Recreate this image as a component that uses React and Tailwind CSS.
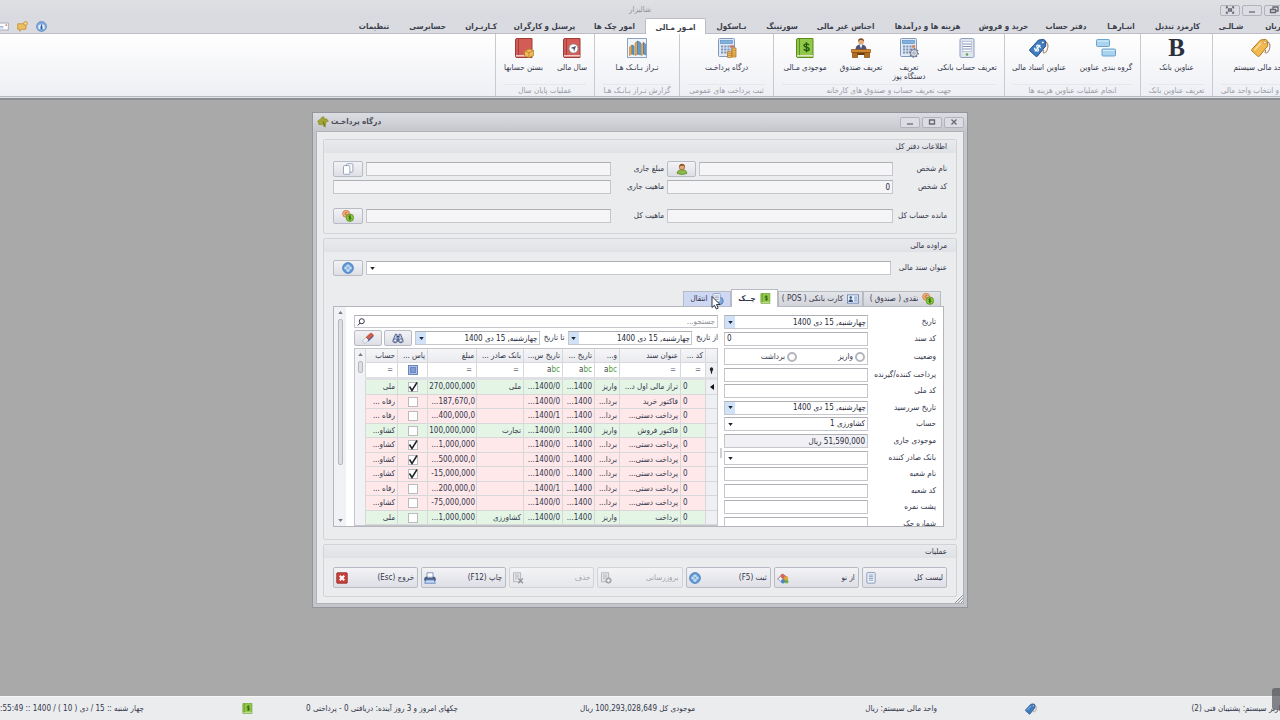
import React from 'react';

/* ---------- icons ---------- */
const Svg = ({ className = 'size-5', box = 20, children }) => (
  <svg viewBox={`0 0 ${box} ${box}`} className={`shrink-0 ${className}`} fill="none" aria-hidden="true">
    {children}
  </svg>
);

const TagIcon = ({ className, fill = '#f2b950', stroke = '#b57a1f', money }) => (
  <Svg className={className}>
    <path d="M14 4.500c3.500-1.500 5.500 1 4.800 5-.5 3-2.300 6-4 5.500-1-.4-.8-2 .2-3" stroke="#a98a6a" strokeWidth="1.100" />
    <path d="M0.800 11.500 9.500 2l5.200-.6 1.800 1.500.2 5L8.400 18.200q-.8.7-1.600 0L.8 12.800q-.6-.6 0-1.300z" fill={fill} stroke={stroke} />
    <circle cx="13.800" cy="4.500" r="1.300" fill="#fff" stroke={stroke} strokeWidth=".6" />
    {money && (
      <g transform="rotate(40 8.500 10)" stroke="#fff" strokeWidth="1.200">
        <path d="M10.800 8.200c-1-1.500-4.600-1.300-4.400.4.200 1.700 4.500 1 4.500 2.900 0 1.700-3.700 1.900-4.800.2M8.600 5.800v8.400" />
      </g>
    )}
    {!money && <path d="M3.500 12 10 5" stroke="#ffffff" strokeOpacity=".5" strokeWidth="1.500" />}
  </Svg>
);
const BoldIcon = () => <span className="h-5 font-['Liberation_Serif',serif] text-[25px] leading-5 font-bold text-[#2b3040]">B</span>;
const BlocksIcon = () => (
  <Svg>
    <rect x=".5" y="1.500" width="13" height="7" rx="1" fill="#a9d3ef" stroke="#6aa3cf" />
    <rect x="6" y="11" width="13.500" height="7" rx="1" fill="#a9d3ef" stroke="#6aa3cf" />
    <path d="M1.500 3h11M7 12.500h11.500" stroke="#d9eefa" />
  </Svg>
);
const PhoneDocIcon = () => (
  <Svg>
    <rect x="3" y=".5" width="14" height="19" rx="1.500" fill="#dfe5f0" stroke="#8f9ebd" />
    <rect x="5.500" y="3.500" width="9" height="10" fill="#fff" stroke="#a9b5cc" strokeWidth=".7" />
    <path d="M6 6h8M6 8.500h8M6 11h8" stroke="#8496ba" />
    <circle cx="10" cy="16.500" r="1.200" fill="#58a83e" />
  </Svg>
);
const CalcBase = () => (
  <>
    <rect x="1.500" y=".5" width="16" height="18" rx="1" fill="#dfe9f5" stroke="#8299bd" />
    <rect x="3.500" y="2.500" width="12" height="3" fill="#7fb2e0" stroke="#5685b8" strokeWidth=".6" />
    <path d="M4 8.500h12M4 11.500h12M4 14.500h12" stroke="#7d93b8" strokeWidth="2" strokeDasharray="2.200 1" />
  </>
);
const CalcGearIcon = () => (
  <Svg>
    <CalcBase />
    <path d="M13 8.500h3" stroke="#dd7a3c" strokeWidth="2" />
    <circle cx="15" cy="15" r="3.500" fill="#e3e6ec" stroke="#6f7a8e" />
    <circle cx="15" cy="15" r="4.300" stroke="#6f7a8e" strokeWidth="1.200" strokeDasharray="1.500 1.800" />
    <circle cx="15" cy="15" r="1.200" fill="#fff" stroke="#6f7a8e" strokeWidth=".7" />
  </Svg>
);
const CalcCoinsIcon = () => (
  <Svg>
    <CalcBase />
    <path d="M13 8.500h4" stroke="#cf6a55" strokeWidth="2" />
    <path d="M15 10h4v9h-4zM10.500 13.500h4v6h-4z" fill="#edb85e" stroke="#b57d2c" strokeWidth=".8" />
    <path d="M15 12.500h4M15 15h4M15 17.200h4M10.500 15.500h4M10.500 17.500h4" stroke="#b57d2c" strokeWidth=".6" />
  </Svg>
);
const DeskIcon = () => (
  <Svg>
    <circle cx="10" cy="3.500" r="3" fill="#e2ad7c" />
    <path d="M7 3.500C6.500-1 13.500-1 13 3.500 12 1.500 8 1.500 7 3.500z" fill="#7b4a22" />
    <path d="M4.500 12c0-4 2-5.500 5.500-5.500s5.500 1.500 5.500 5.500z" fill="#4b5578" />
    <path d="m8.500 6.500 1.500 4 1.500-4z" fill="#fff" />
    <path d="M.5 11.500h19v3h-19z" fill="#d5872f" stroke="#8e5214" strokeWidth=".7" />
    <path d="M1.500 14.500h5v5h-5zM13.500 14.500h5v5h-5z" fill="#b66c1f" stroke="#7d470f" strokeWidth=".7" />
    <path d="M6.500 14.500h7v2.500h-7z" fill="#6e3e10" />
  </Svg>
);
const BookIcon = ({ className, color = '#d35d56', edge = '#9c3d38', children }) => (
  <Svg className={className}>
    <path d="M1.500 2q0-1.500 1.500-1.500h15V19.500H3q-1.500 0-1.500-1.500z" fill={color} stroke={edge} />
    <path d="M4.500.5v17.500" stroke={edge} strokeWidth=".9" />
    <path d="M2 17.800h16" stroke="#f4ecec" strokeWidth="1.200" />
    {children}
  </Svg>
);
const Dollar = ({ color = '#215c0c' }) => (
  <path d="M14 7.200c-1.200-2-5-1.700-5 .3 0 2.200 5.200 1.200 5.200 3.400 0 2-4.200 2.300-5.400.3M11.500 4.200v10" stroke={color} strokeWidth="1.400" />
);
const MoneyBookIcon = ({ className }) => (
  <BookIcon className={className} color="#93c74a" edge="#5a8c1e"><Dollar /></BookIcon>
);
const BookBoxIcon = () => (
  <BookIcon>
    <path d="m10.500 13 5-2 4 1.500v5l-4.500 2.200-4.500-2z" fill="#efbb5c" stroke="#b27a22" strokeWidth=".7" />
    <path d="m10.500 13 4.500 1.700 4.500-2M15 14.700v5" stroke="#b27a22" strokeWidth=".7" />
  </BookIcon>
);
const BookClockIcon = () => (
  <BookIcon>
    <circle cx="11.500" cy="10.500" r="4.500" fill="#fff" stroke="#8b8f99" strokeWidth=".8" />
    <path d="m14 8-5.500 2 3 .8.500 3z" fill="#4a5266" />
  </BookIcon>
);
const BarsIcon = () => (
  <Svg>
    <rect x=".5" y=".5" width="19" height="19" fill="#eef4fa" stroke="#8ea4c0" />
    <path d="M2.500 9l2.500-2V16l-2.500 1.500zM8 5l2.500-2v13.500L8 17.500zM14.500 6l2-1.500V16l-2 1.500z" fill="#e9a94f" stroke="#a96d24" strokeWidth=".5" />
    <path d="M5 7l2 1v9l-2-1zM10.500 3l3 1.500V17l-3-1zM16.500 4.500l2 1.500v11l-2-1z" fill="#5f9bd0" stroke="#34648f" strokeWidth=".5" />
  </Svg>
);
const PlusIcon = ({ className = 'size-3' }) => (
  <Svg className={className} box={16}>
    <circle cx="8" cy="8" r="7.200" fill="#5f9ad6" stroke="#3c74b0" />
    <path d="M8 3.500v9M3.500 8h9" stroke="#fff" strokeWidth="3.600" />
    <path d="M8 4.500v7M4.500 8h7" stroke="#5f9ad6" strokeWidth="1.300" />
  </Svg>
);
const CoinsIcon = ({ className = 'size-3' }) => (
  <Svg className={className} box={16}>
    <circle cx="5.500" cy="5" r="4.700" fill="#efb080" stroke="#c97737" />
    <path d="M7 3.500C4 2 3 7 6.500 6.500" stroke="#a4501b" />
    <circle cx="10.500" cy="10.300" r="5" fill="#8cc63e" stroke="#568a1c" />
    <path d="M12 8.500c-1-1-3-.7-3 .5s3 .8 3 2-2.200 1.300-3.200.3M10.500 7v6.800" stroke="#275a0b" />
  </Svg>
);
const CopyIcon = () => (
  <Svg className="size-3" box={16}>
    <rect x="6" y="1" width="8.500" height="11" rx="1" fill="#fff" stroke="#7c8cae" />
    <rect x="2" y="3.500" width="8.500" height="11.500" rx="1" fill="#fff" stroke="#7c8cae" />
  </Svg>
);
const UserIcon = () => (
  <Svg className="size-3" box={16}>
    <path d="M1.500 14c0-4 3-5 6.500-5s6.500 1 6.500 5q-6.500 2.500-13 0z" fill="#8db84a" stroke="#5d8526" />
    <circle cx="8" cy="5.500" r="3.600" fill="#e0a878" stroke="#8c5325" strokeWidth=".8" />
    <path d="M4.300 5.500C3.500-.5 12.500-.5 11.700 5.500 10.500 3 6 3 4.300 5.500z" fill="#8c5325" />
  </Svg>
);
const CardIcon = () => (
  <Svg className="size-3" box={16}>
    <rect x=".5" y="2.500" width="15" height="11" fill="#e8f0fa" stroke="#5477ab" />
    <circle cx="5" cy="6" r="1.700" fill="#34517f" />
    <path d="M2 12c0-5 6-5 6 0z" fill="#34517f" />
    <path d="M9.500 5.500H14M9.500 8H14M9.500 10.500H14" stroke="#5477ab" />
  </Svg>
);
const TransferIcon = () => (
  <Svg className="size-3" box={16}>
    <circle cx="10" cy="10.500" r="5" fill="#7fa9dc" stroke="#4873ad" />
    <rect x="1.500" y=".8" width="9.500" height="11" rx="1" fill="#f2f6fc" stroke="#7d92b8" />
    <path d="M3.500 4h5.500M3.500 6.200h5.500M3.500 8.500h5.500" stroke="#7d92b8" />
  </Svg>
);
const BinocularsIcon = () => (
  <Svg className="h-3 w-3.5" box={16}>
    <path d="M4.500 3h2l1 9c-.5 3-6 3-6.500 0zM11.500 3h-2l-1 9c.5 3 6 3 6.500 0z" fill="#b9c8e8" stroke="#34456f" />
    <circle cx="4.200" cy="11.300" r="2" fill="#eef3fc" stroke="#34456f" strokeWidth=".8" />
    <circle cx="11.800" cy="11.300" r="2" fill="#eef3fc" stroke="#34456f" strokeWidth=".8" />
    <path d="M6.500 6h3" stroke="#34456f" strokeWidth="1.500" />
  </Svg>
);
const EraserIcon = () => (
  <Svg className="size-3" box={16}>
    <path d="M1 11.500 5.500 7l4 3.500L5 14.500q-1 .8-2 0L1 13z" fill="#f0f2f7" stroke="#9aa2b5" strokeWidth=".8" />
    <path d="m5.500 7 5.500-5q1-.8 2 0l1.800 1.500q.8.800 0 1.800l-5.300 5.200z" fill="#d95b45" stroke="#9d3524" strokeWidth=".8" />
    <path d="m8 12 7-6.500" stroke="#4169a8" strokeWidth="1.500" />
  </Svg>
);
const ListIcon = () => (
  <Svg className="size-3" box={16}>
    <rect x="2.500" y=".8" width="11" height="14" rx="1" fill="#f4f7fc" stroke="#6a80ad" />
    <path d="M5 4h6M5 6.300h6M5 8.600h6M5 11h6" stroke="#6a80ad" />
  </Svg>
);
const RenewIcon = () => (
  <Svg className="size-3" box={16}>
    <path d="m1 9.500 6-7 6 4-4.500 7z" fill="#d8654f" stroke="#a43d2a" strokeWidth=".8" />
    <path d="m1 9.500 3.500-4 3.500 4-3 3z" fill="#eceff6" stroke="#8d97ab" strokeWidth=".8" />
    <circle cx="12" cy="8.500" r="3" fill="#e0a63a" />
    <circle cx="8" cy="12.500" r="2.800" fill="#4b86c9" />
    <circle cx="12.800" cy="12.700" r="2.500" fill="#6fae41" />
  </Svg>
);
const DocBadgeIcon = ({ cross }) => (
  <Svg className="size-3" box={16}>
    <path d="M2 1h9.500v12H2z" fill="#e7e8eb" stroke="#a3a6ad" />
    <path d="M4 4h5.500M4 6.500h5.500M4 9h3" stroke="#a3a6ad" />
    {cross ? <path d="m8.500 8.500 6 6.500m0-6.500-6 6.500" stroke="#8f929a" strokeWidth="1.800" /> : <circle cx="11.300" cy="11.300" r="3.600" fill="#b3b6bc" stroke="#94979f" />}
    {!cross && <path d="M9.300 11.300h4M11.300 9.500v3.600" stroke="#fff" />}
  </Svg>
);
const PrinterIcon = () => (
  <Svg className="size-3" box={16}>
    <path d="M4 1h8v6H4z" fill="#fff" stroke="#6078a8" />
    <path d="M1 8.500q0-1.500 1.500-1.500H4v1.500h8V7h1.500Q15 7 15 8.500v3H1z" fill="#54688f" stroke="#2f4170" />
    <path d="M2.500 10.500h11l1.500 4.500H1z" fill="#c3d6f3" stroke="#5177b8" />
  </Svg>
);
const ExitIcon = () => (
  <Svg className="size-3" box={16}>
    <rect x="1" y="1" width="14" height="14" rx="1" fill="#c8413b" stroke="#8c211d" />
    <path d="m5 5 6 6m0-6-6 6" stroke="#fff" strokeWidth="2.600" />
  </Svg>
);
const LeafIcon = () => (
  <Svg className="size-3" box={16}>
    <path d="M1 8c1-4 3-3 4-3 0-3 2-4 4-4 0 2 1 2 1 3 3-1 4 1 5 3-2 0-2 2-4 2 1 3 0 4-2 5-1-1-1-2-1-4-2 2-4 2-6 1 1-2 0-2-1-3z" fill="#a3a532" stroke="#7b7f1d" strokeWidth=".8" />
    <path d="M8 7q2 4 3 8" stroke="#6b6a1b" strokeWidth="1.200" />
  </Svg>
);
const InfoIcon = () => (
  <Svg className="size-[11px]" box={16}>
    <circle cx="8" cy="8" r="7.200" fill="#7faade" stroke="#5580b6" />
    <path d="M3.500 6.500q4.500-3.500 9 0v5H10v-4H6v4H3.500z" fill="#e6f1fb" />
    <path d="M8 5v7" stroke="#32598f" strokeWidth="1.600" />
  </Svg>
);
const ChatIcon = () => (
  <Svg className="size-[11px]" box={16}>
    <path d="M1 4h12v8H7l-3 3v-3H1z" fill="#f0be5e" stroke="#b98327" />
    <circle cx="12.500" cy="3.500" r="2.800" fill="#f6d28a" stroke="#b98327" />
  </Svg>
);
const MailIcon = () => (
  <Svg className="size-[11px]" box={16}>
    <path d="M-2 3h17v10H-2z" fill="#fff" stroke="#8a93a8" />
    <path d="M1 8h7M1 10h7" stroke="#7d9bcb" />
    <path d="M11 5h2v2h-2z" fill="#c8413b" />
  </Svg>
);
const Caret = () => (
  <svg viewBox="0 0 6 4" className="h-[3px] w-[5px] shrink-0" aria-hidden="true"><path d="M0 0h6L3 4z" fill="#1f2430" /></svg>
);

/* ---------- shared controls ---------- */
const field = 'h-3.5 min-w-0 rounded-none border border-[#c6c7cc] border-t-[#aeb0b6] px-0.5 text-[#262938] outline-none';
const buttonFace = 'border border-[#b9bbc4] rounded-[2px] bg-linear-to-b from-[#f3f3f6] to-[#dedfe6]';

const IconButton = ({ label, children, className = 'w-[29px]' }) => (
  <button type="button" aria-label={label} className={`flex h-4 shrink-0 items-center justify-center ${buttonFace} ${className}`}>{children}</button>
);

const DateBox = ({ id, label, className = '' }) => (
  <div className={`flex h-3.5 min-w-0 border border-[#c6c7cc] border-t-[#aeb0b6] bg-white ${className}`}>
    <input id={id} aria-label={label} defaultValue="چهارشنبه, 15 دی 1400" className="h-full min-w-0 flex-1 bg-transparent px-px text-[#262938] outline-none" />
    <button type="button" aria-label="انتخاب تاریخ" className="flex h-full w-2.5 items-center justify-center bg-[#cfe2f8]"><Caret /></button>
  </div>
);

const SelectBox = ({ id, value, className = '' }) => (
  <div className={`relative min-w-0 ${className}`}>
    <select id={id} className={`${field} block w-full appearance-none bg-white py-0 leading-3`}>
      <option>{value}</option>
    </select>
    <span className="pointer-events-none absolute top-1.5 left-1 flex"><Caret /></span>
  </div>
);

const GroupBox = ({ title, children, className = '' }) => (
  <section className={`rounded-[2px] border border-[#d2d3d7] ${className}`}>
    <h2 className="h-[13px] bg-linear-to-b from-[#e9eaed] to-[#e1e2e6] px-[9px] leading-[13px]">{title}</h2>
    {children}
  </section>
);

/* ---------- ribbon ---------- */
const menuTabs = [
  ['مشتریان', 'w-[55px]'], ['شـالـی', 'w-11'], ['کارمزد تبدیل', 'w-[63px]'], ['انبـارهـا', 'w-[50px]'],
  ['دفتر حساب', 'w-[60px]'], ['خرید و فروش', 'w-[65px]'], ['هزینه ها و درآمدها', 'w-[87px]'], ['اجناس غیر مالی', 'w-[77px]'],
  ['سورتینگ', 'w-[50px]'], ['بـاسکول', 'w-[51px]'], ['امـور مـالی', 'w-[61px]'], ['امور چک ها', 'w-[61px]'],
  ['پرسنل و کارگران', 'w-[79px]'], ['کـاربـران', 'w-12'], ['حسابرسی', 'w-[59px]'], ['تنظیمات', 'w-12'],
];

const ribbonGroups = [
  { title: 'تعریف و انتخاب واحد مالی', w: 'w-24', items: [['واحد مالی سیستم', 'w-24', <TagIcon />]] },
  { title: 'تعریف عناوین بانک', w: 'w-[72px]', items: [['عناوین بانک', 'w-[70px]', <BoldIcon />]] },
  { title: 'انجام عملیات عناوین هزینه ها', w: 'w-[136px]', items: [['گروه بندی عناوین', 'w-[67px]', <BlocksIcon />], ['عناوین اسناد مالی', 'w-[67px]', <TagIcon fill="#3f7cc0" stroke="#24508a" money />]] },
  { title: 'جهت تعریف حساب و صندوق های کارخانه', w: 'w-[231px]', items: [['تعریف حساب بانکی', 'w-[72px]', <PhoneDocIcon />], [<>تعریف<br />دستگاه پوز</>, 'w-11', <CalcGearIcon />], ['تعریف صندوق', 'w-[52px]', <DeskIcon />], ['موجودی مـالی', 'w-[60px]', <MoneyBookIcon />]] },
  { title: 'ثبت پرداخت های عمومی', w: 'w-[94px]', items: [['درگاه پرداخـت', 'w-[92px]', <CalcCoinsIcon />]] },
  { title: 'گزارش تـراز بـانـک هـا', w: 'w-[85px]', items: [['تـراز بـانـک هـا', 'w-[83px]', <BarsIcon />]] },
  { title: 'عملیات پایان سال', w: 'w-[99px]', items: [['سال مالی', 'w-[43px]', <BookClockIcon />], ['بستن حسابها', 'w-[54px]', <BookBoxIcon />]] },
];

const WinButton = ({ label, children }) => (
  <button type="button" aria-label={label} className="flex h-[11px] w-5 items-center justify-center rounded-[2px] border border-[#b2b3ba] bg-[#dcdde2]">
    <svg viewBox="0 0 10 8" className="h-2 w-2.5" fill="none" stroke="#666872" strokeWidth="1.300">{children}</svg>
  </button>
);

function Ribbon() {
  return (
    <header className="shrink-0 overflow-hidden bg-[#dadbe0]">
      <div className="relative flex h-[18px] items-center gap-0.5 bg-linear-to-b from-[#dfe0e3] to-[#d9dadf] pt-0.5">
        <div className="-mr-1 flex gap-0.5">
          <WinButton label="بازگردانی"><path d="M4 3V1h5v4H7M1.500 3.500h5v3h-5z" /></WinButton>
          <WinButton label="کوچک کردن"><path d="M2 6h6" /></WinButton>
          <WinButton label="تمام صفحه"><path d="M1.500 2.500V1H3M7 1h1.500v1.500M8.500 5.500V7H7M3 7H1.500V5.500M3.500 3h3v2h-3z" /></WinButton>
        </div>
        <h1 className="absolute inset-x-0 text-center text-[#8f9198]">شالیزار</h1>
      </div>
      <nav className="flex h-4 items-end justify-between border-b border-[#bdbdc6]">
        <div className="-mr-7 -mb-px flex h-4 shrink-0">
          {menuTabs.map(([name, w]) => (
            <a key={name} href="#" className={`flex items-center justify-center pt-0.5 font-bold whitespace-nowrap text-[#3b3e4b] ${w} ${name === 'امـور مـالی' ? 'rounded-t-[2px] border border-b-0 border-[#bdbdc6] bg-white' : ''}`}>{name}</a>
          ))}
        </div>
        <div className="flex h-full items-center gap-2 pt-px">
          <button type="button" aria-label="درباره"><InfoIcon /></button>
          <button type="button" aria-label="گفتگو"><ChatIcon /></button>
          <button type="button" aria-label="نامه" className="-ml-0.5"><MailIcon /></button>
        </div>
      </nav>
      <div className="flex h-[63px] border-b border-[#b7b9bf] bg-linear-to-b from-white to-[#eeeff4]">
        <div className="-mr-7 flex shrink-0">
          {ribbonGroups.map((g) => (
            <section key={g.title} className={`flex flex-col border-l border-[#c9cad1] ${g.w}`}>
              <div className="flex flex-1 justify-center pt-1">
                {g.items.map(([name, w, icon], i) => (
                  <button key={i} type="button" className={`flex flex-col items-center gap-[5px] text-[#33364a] ${w}`}>
                    {icon}
                    <span className="leading-[9px] whitespace-nowrap">{name}</span>
                  </button>
                ))}
              </div>
              <h2 className="mx-2 flex h-3 items-center justify-center border-t border-[#e6e7ec] whitespace-nowrap text-[#989aa5]">{g.title}</h2>
            </section>
          ))}
        </div>
      </div>
      <div className="h-[3px] border-b-2 border-[#8b8f94] bg-[#dfe2e6]" />
    </header>
  );
}

/* ---------- ledger section ---------- */
const Label = ({ htmlFor, className, children }) => (
  <label htmlFor={htmlFor} className={`shrink-0 whitespace-nowrap ${className}`}>{children}</label>
);
const readOnly = `${field} flex-1 bg-[#f5f5f8]`;

function LedgerInfo() {
  return (
    <GroupBox title="اطلاعات دفتر کل">
      <div className="flex flex-col px-[9px] pt-[7px] pb-2">
        <div className="flex h-[18px] items-center">
          <Label htmlFor="person" className="w-[54px]">نام شخص</Label>
          <div className="flex w-[226px] shrink-0 items-center gap-[3px]">
            <input id="person" className={readOnly} />
            <IconButton label="انتخاب شخص"><UserIcon /></IconButton>
          </div>
          <Label htmlFor="amount" className="w-14 pr-[3px]">مبلغ جاری</Label>
          <input id="amount" className={readOnly} />
          <IconButton label="رونوشت" className="mr-[3px] w-[30px]"><CopyIcon /></IconButton>
        </div>
        <div className="flex h-[18px] items-center">
          <Label htmlFor="pcode" className="w-[54px]">کد شخص</Label>
          <input id="pcode" defaultValue="0" className={`${field} w-[226px] shrink-0 bg-[#f5f5f8]`} />
          <Label htmlFor="nature" className="w-14 pr-[3px]">ماهیت جاری</Label>
          <input id="nature" className={readOnly} />
        </div>
        <div className="mt-[11px] flex h-[18px] items-center">
          <Label htmlFor="total" className="w-[54px]">مانده حساب کل</Label>
          <input id="total" className={`${field} w-[226px] shrink-0 bg-[#f5f5f8]`} />
          <Label htmlFor="tnature" className="w-14 pr-[3px]">ماهیت کل</Label>
          <input id="tnature" className={readOnly} />
          <IconButton label="تسویه" className="mr-[3px] w-[30px]"><CoinsIcon /></IconButton>
        </div>
      </div>
    </GroupBox>
  );
}

/* ---------- cheque form ---------- */
const Row = ({ id, label, children }) => (
  <div className="flex items-center">
    <Label htmlFor={id} className="w-[68px]">{label}</Label>
    {children}
  </div>
);
const TextRow = ({ id, label, value, className = 'bg-white' }) => (
  <Row id={id} label={label}><input id={id} defaultValue={value} className={`${field} flex-1 ${className}`} /></Row>
);

function ChequeForm() {
  return (
    <form className="flex h-[216px] w-[212px] shrink-0 flex-col justify-between">
      <Row id="date" label="تاریخ"><DateBox id="date" className="flex-1" /></Row>
      <TextRow id="doc" label="کد سند" value="0" className="bg-white text-left" />
      <div className="flex h-[17px] items-center">
        <span className="w-[68px] shrink-0">وضعیت</span>
        <div className="flex h-full flex-1 items-center border border-[#c6c7cc] pr-0.5">
          {['واریز', 'برداشت'].map((s) => (
            <label key={s} className="flex w-[68px] items-center gap-0.5">
              <input type="radio" name="state" className="size-2.5 appearance-none rounded-full border-2 border-[#b4b6bc] bg-white" />
              {s}
            </label>
          ))}
        </div>
      </div>
      <TextRow id="payer" label="پرداخت کننده/گیرنده" />
      <TextRow id="nid" label="کد ملی" />
      <Row id="due" label="تاریخ سررسید"><DateBox id="due" className="flex-1" /></Row>
      <Row id="acc" label="حساب"><SelectBox id="acc" value="کشاورزی 1" className="flex-1" /></Row>
      <TextRow id="bal" label="موجودی جاری" value="51,590,000 ریال" className="bg-[#f1f1f5]" />
      <Row id="bank" label="بانک صادر کننده"><SelectBox id="bank" value="" className="flex-1" /></Row>
      <TextRow id="branch" label="نام شعبه" />
      <TextRow id="bcode" label="کد شعبه" />
      <TextRow id="back" label="پشت نمره" />
      <TextRow id="chno" label="شماره چک" />
    </form>
  );
}

/* ---------- cheque grid ---------- */
const columns = [
  ['', 'w-3'], ['کد ...', 'w-[25px]'], ['عنوان سند', 'w-[61px]'], ['و...', 'w-[25px]'], ['تاریخ ...', 'w-8'],
  ['تاریخ س...', 'w-[39px]'], ['بانک صادر ...', 'w-[47px]'], ['مبلغ', 'w-[49px]'], ['پاس ...', 'w-[30px]'], ['حساب', 'w-8'],
];
const filters = ['pin', '=', '=', 'abc', 'abc', 'abc', '=', '=', 'box', '='];
const IN = 'واریز';
const OUT = 'بردا...';
const MANUAL = 'پرداخت دستی...';
const rows = [
  ['تراز مالی اول د...', IN, '1400/0...', 'ملی', '270,000,000', true, 'ملی'],
  ['فاکتور خرید', OUT, '1400/0...', '', '187,670,0...', false, 'رفاه ...'],
  [MANUAL, OUT, '1400/1...', '', '400,000,0...', false, 'رفاه ...'],
  ['فاکتور فروش', IN, '1400/0...', 'تجارت', '100,000,000', false, 'کشاو...'],
  [MANUAL, OUT, '1400/0...', '', '1,000,000...', true, 'کشاو...'],
  [MANUAL, OUT, '1400/0...', '', '500,000,0...', true, 'کشاو...'],
  [MANUAL, OUT, '1400/0...', '', '\u200e-15,000,000', true, 'کشاو...'],
  [MANUAL, OUT, '1400/1...', '', '200,000,0...', false, 'رفاه ...'],
  [MANUAL, OUT, '1400/0...', '', '\u200e-75,000,000', false, 'کشاو...'],
  ['پرداخت', IN, '1400/0...', 'کشاورزی', '1,000,000...', false, 'ملی'],
];

const Check = ({ on }) => (
  <span className="relative mx-auto block size-2.5">
    <input type="checkbox" defaultChecked={on} aria-label="پاس شده" className="block size-2.5 appearance-none border border-[#b9bbc1] bg-white" />
    {on && (
      <svg viewBox="0 0 10 10" className="pointer-events-none absolute inset-0 size-2.5" fill="none"><path d="M1.500 4.500 4 8.500 9 .5" stroke="#22252e" strokeWidth="1.500" /></svg>
    )}
  </span>
);

const filterCell = (f) => {
  if (f === 'pin') return <svg viewBox="0 0 6 8" className="mx-auto h-[7px] w-[5px]"><path d="M3 0a2.500 2.500 0 0 1 1 4.500L3.500 8h-1L2 4.500A2.500 2.500 0 0 1 3 0z" fill="#22252e" /></svg>;
  if (f === 'box') return <span className="mx-auto block size-2.5 border border-[#6c86bf] bg-[#a9bfe8] p-px"><span className="block h-full border border-[#6c86bf] bg-[#7f9bd4]" /></span>;
  if (f === 'abc') return <span dir="ltr" className="block text-right text-[#3c3f4c]">a<span className="text-[#4f9e3a]">bc</span></span>;
  return <span className="block pr-0.5 text-right text-[#666974]">=</span>;
};

function ScrollTrack({ thumb, className, bottom }) {
  return (
    <div className={`flex shrink-0 flex-col items-center justify-between bg-[#f1f2f5] ${className}`}>
      <div className="flex flex-1 flex-col items-center gap-[5px] pt-1">
        <svg viewBox="0 0 6 4" className="h-[3px] w-[5px]"><path d="M0 4h6L3 0z" fill="#777a85" /></svg>
        <div className={`w-[5px] rounded-[2px] border border-[#b6b8bf] bg-[#dedfe4] ${thumb}`} />
      </div>
      {bottom && <svg viewBox="0 0 6 4" className="mb-1 h-[3px] w-[5px]"><path d="M0 0h6L3 4z" fill="#777a85" /></svg>}
    </div>
  );
}

function ChequeGrid() {
  const box = 'overflow-hidden border-l border-[#d6d8da] p-0 whitespace-nowrap';
  const cell = `${box} px-0.5`;
  return (
    <div className="flex h-[178px] border border-[#c3c5cb] bg-white">
      <table className="w-[352px] shrink-0 table-fixed border-separate border-spacing-0">
        <thead>
          <tr className="h-3.5 bg-linear-to-b from-[#f6f6f9] to-[#e9eaee]">
            {columns.map(([c, w], i) => (
              <th key={i} className={`${cell} border-b text-right font-normal ${w}`}>{c}</th>
            ))}
          </tr>
          <tr className="h-3.5">
            {filters.map((f, i) => <td key={i} className={`${cell} ${i === 0 ? 'bg-[#eff0f4]' : ''}`}>{filterCell(f)}</td>)}
          </tr>
          <tr className="h-[3px]"><td colSpan={10} className="bg-[#dfe0e4] p-0" /></tr>
        </thead>
        <tbody>
          {rows.map((r, i) => {
            const tone = r[1] === IN ? 'bg-[#e4f5e6]' : 'bg-[#ffe8ea]';
            const c = `${cell} border-b ${tone}`;
            return (
              <tr key={i} className="leading-3 odd:h-[15px] even:h-3.5">
                <td className={`${cell} border-b bg-[#eff0f4]`}>
                  {i === 0 && <svg viewBox="0 0 4 6" className="mx-auto h-1.5 w-1"><path d="M4 0v6L0 3z" fill="#111" /></svg>}
                </td>
                <td className={`${c} text-left`}>0</td>
                <td className={c}>{r[0]}</td>
                <td className={c}>{r[1]}</td>
                <td className={c}>1400...</td>
                <td className={c}>{r[2]}</td>
                <td className={c}>{r[3]}</td>
                <td className={`${box} border-b pr-px ${tone}`}>{r[4]}</td>
                <td className={c}><Check on={r[5]} /></td>
                <td className={c}>{r[6]}</td>
              </tr>
            );
          })}
        </tbody>
      </table>
      <ScrollTrack thumb="h-3" className="flex-1" />
    </div>
  );
}

function ChequeList() {
  return (
    <div className="flex min-w-0 flex-1 flex-col">
      <div className="flex h-3.5 items-center border border-[#c6c7cc] border-t-[#aeb0b6]">
        <input aria-label="جستجو" placeholder="جستجو..." className="h-full min-w-0 flex-1 px-0.5 outline-none placeholder:text-[#8c8e96]" />
        <svg viewBox="0 0 8 8" className="ml-0.5 size-2" fill="none" stroke="#33364a" strokeWidth="1"><circle cx="4.800" cy="3.200" r="2.500" /><path d="M3 5 .8 7.500" /></svg>
      </div>
      <div className="mt-0.5 flex h-4 items-center">
        <Label htmlFor="from" className="w-[26px]">از تاریخ</Label>
        <DateBox id="from" className="flex-1" />
        <Label htmlFor="to" className="w-7 pr-[3px]">تا تاریخ</Label>
        <DateBox id="to" className="flex-1" />
        <IconButton label="جستجو" className="mr-[3px] w-7"><BinocularsIcon /></IconButton>
        <IconButton label="پاک کردن" className="mr-0.5 w-7"><EraserIcon /></IconButton>
      </div>
      <div className="mt-0.5"><ChequeGrid /></div>
    </div>
  );
}

/* ---------- window ---------- */
const tabs = [
  ['نقدی ( صندوق )', <CoinsIcon />, 'w-[78px]'],
  ['کارت بانکی ( POS )', <CardIcon />, 'w-[85px]'],
  ['چــک', <MoneyBookIcon className="size-[11px]" />, 'w-[47px]'],
  ['انتقال', <TransferIcon />, 'w-12'],
];
const tabTone = (i) => {
  if (i === 2) return 'h-[18px] border-b-0 bg-white font-bold';
  if (i === 3) return 'h-4 bg-[#cfd8f3]';
  return 'h-4 bg-linear-to-b from-[#e4e5e9] to-[#d3d4da]';
};

const actions = [
  ['لیست کل', <ListIcon />], ['از نو', <RenewIcon />], ['ثبت (F5)', <PlusIcon />], ['بروزرسانی', <DocBadgeIcon />, true],
  ['حذف', <DocBadgeIcon cross />, true], ['چاپ (F12)', <PrinterIcon />], ['خروج (Esc)', <ExitIcon />],
];

function PaymentWindow() {
  return (
    <div className="relative mx-auto mt-3 flex w-[656px] flex-col border border-[#94959b] bg-[#c4c5cb] px-[3px] pb-[3px]">
      <div className="-mx-[3px] flex h-[18px] items-center justify-between bg-linear-to-b from-[#dcdde2] to-[#c6c7cd] pr-[3px] pl-1">
        <div className="flex gap-0.5">
          <WinButton label="بستن"><path d="m2.500 1.500 5 5m0-5-5 5" /></WinButton>
          <WinButton label="بزرگ کردن"><path d="M2.500 2h5v4h-5z" /></WinButton>
          <WinButton label="کوچک کردن"><path d="M2 6h6" /></WinButton>
        </div>
        <h1 className="flex items-center gap-0.5 font-bold text-[#4a4c57]">درگاه پرداخـت<LeafIcon /></h1>
      </div>
      <div className="flex flex-col gap-1 border border-[#b1b2b9] bg-[#ebecee] px-1.5 pt-[7px] pb-1.5">
        <LedgerInfo />
        <GroupBox title="مراوده مالی">
          <div className="px-[9px] pt-[7px] pb-3">
            <div className="flex h-[18px] items-center">
              <Label htmlFor="title" className="w-14">عنوان سند مالی</Label>
              <SelectBox id="title" value="" className="flex-1" />
              <IconButton label="افزودن" className="mr-[3px] w-[30px]"><PlusIcon /></IconButton>
            </div>
            <div role="tablist" className="mt-3 -mb-px flex h-[18px] items-end pr-1.5">
              {tabs.map(([name, icon, w], i) => (
                <button key={name} type="button" role="tab" aria-selected={i === 2} className={`relative flex items-center justify-center gap-1 border border-[#b9bbc4] whitespace-nowrap ${w} ${tabTone(i)}`}>
                  {icon}{name}
                  {i === 3 && (
                    <svg viewBox="0 0 10 14" className="absolute top-1 left-[27px] h-3.5 w-2.5"><path d="M1 .5v11l2.500-2.300L5.300 13l1.900-.8L5.500 8.500H9z" fill="#fff" stroke="#22252e" strokeWidth=".9" /></svg>
                  )}
                </button>
              ))}
            </div>
            <div className="mr-[3px] flex h-[221px] overflow-hidden border border-[#b4b6bb] bg-white">
              <div className="flex flex-1 pt-2 pr-[7px] pl-2">
                <ChequeForm />
                <div className="flex w-1.5 shrink-0 items-center justify-center pt-16"><span className="h-2.5 w-0.5 bg-[#cfd0d6]" /></div>
                <ChequeList />
              </div>
              <ScrollTrack thumb="h-[146px]" className="w-3" bottom />
            </div>
          </div>
        </GroupBox>
        <GroupBox title="عملیات">
          <div className="flex gap-[3px] px-[9px] pt-[9px] pb-2">
            {actions.map(([name, icon, off]) => (
              <button key={name} type="button" disabled={off} className={`flex h-[21px] flex-1 items-center justify-between pr-[3px] pl-0.5 ${buttonFace} ${off ? 'border-[#d3d4da] from-[#ebecee] to-[#e6e7ea] text-[#a2a4ac]' : ''}`}>
                {name}{icon}
              </button>
            ))}
          </div>
        </GroupBox>
      </div>
      <svg viewBox="0 0 8 8" className="absolute right-1 bottom-1 size-2" stroke="#8f9199" strokeWidth="1"><path d="M0 8 8 0M3 8l5-5M6 8l2-2" /></svg>
    </div>
  );
}

function StatusBar() {
  return (
    <footer className="relative grid h-6 shrink-0 grid-cols-[243px_100px_242px_237px_205px_109px_1fr] items-center border-t border-[#f6f6f8] bg-[#ebecee] whitespace-nowrap text-[#33364a]">
      <span className="-mr-1">کاربر سیستم: پشتیبان فنی (2)</span>
      <TagIcon className="size-3" fill="#3f7cc0" stroke="#24508a" />
      <span>واحد مالی سیستم: ریال</span>
      <span>موجودی کل 100,293,028,649 ریال</span>
      <span>چکهای امروز و 3 روز آینده: دریافتی 0 - پرداختی 0</span>
      <MoneyBookIcon className="size-[11px]" />
      <span className="min-w-0">چهار شنبه :: 15 / دی ( 10 ) / 1400 :: 11:55:49</span>
      <span className="absolute right-0 bottom-2.5 h-[22px] w-2 rounded-l-[3px] bg-[#55575c]/70" />
    </footer>
  );
}

export default function App() {
  return (
    <div dir="rtl" className="flex min-h-screen flex-col overflow-hidden bg-[#a9a9a9] font-['DejaVu_Sans_Condensed','DejaVu_Sans',sans-serif] text-[8px] leading-3 text-[#33364a]">
      <Ribbon />
      <main className="flex-1"><PaymentWindow /></main>
      <StatusBar />
    </div>
  );
}
